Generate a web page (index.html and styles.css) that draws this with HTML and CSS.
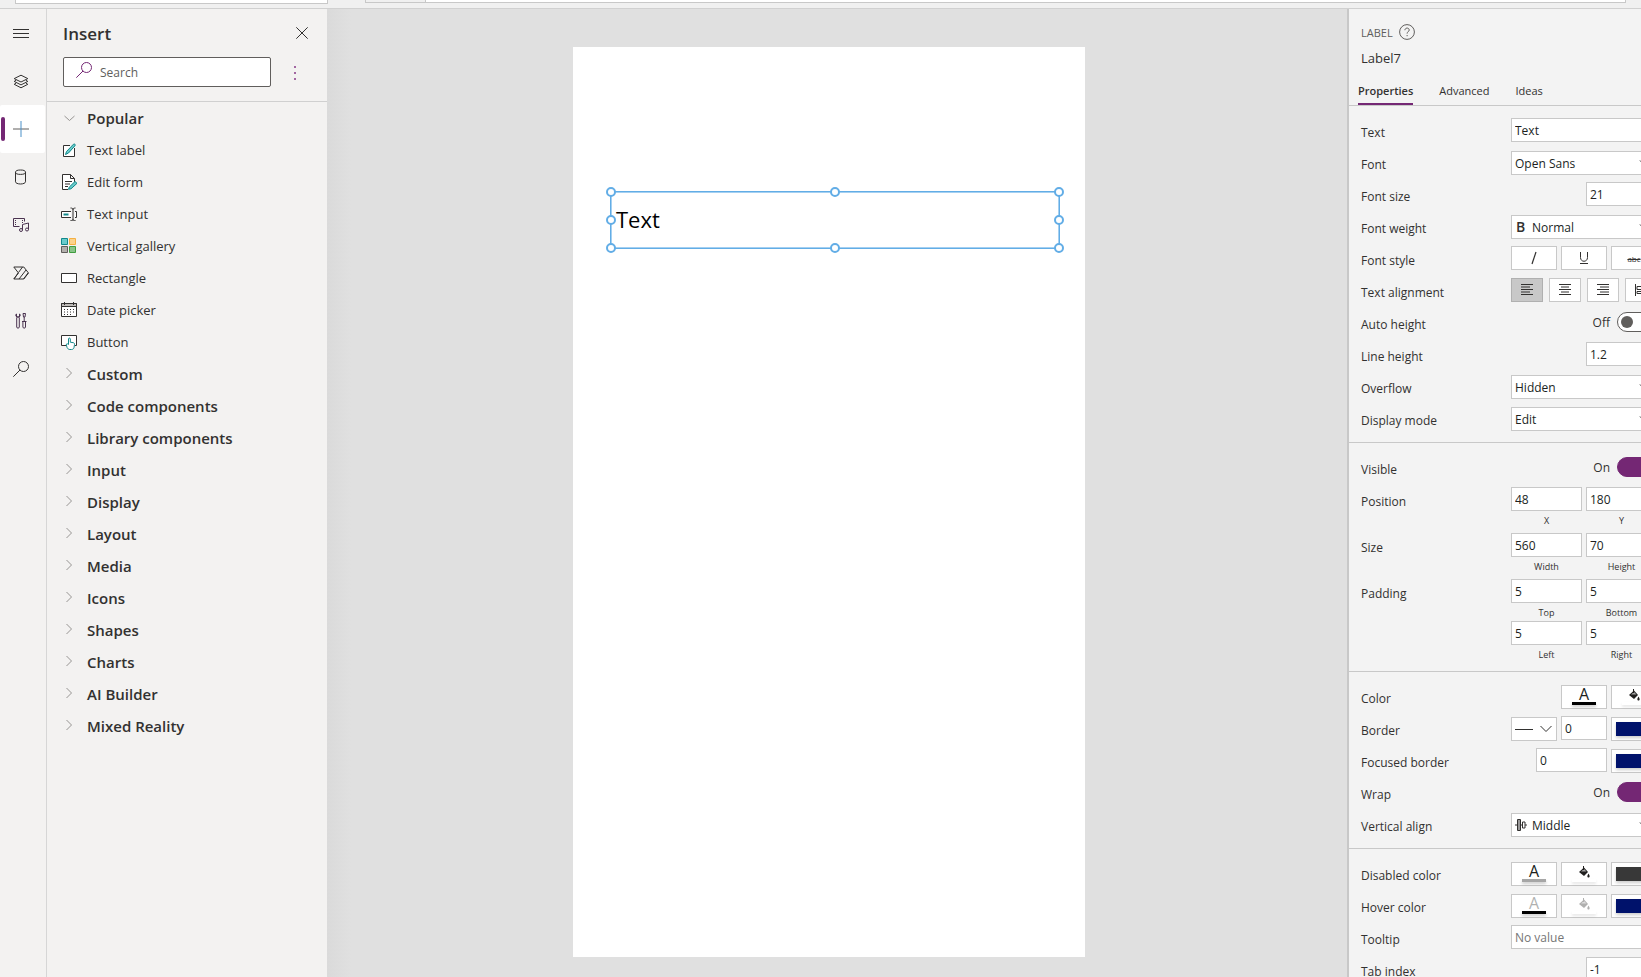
FILE: index.html
```html
<!DOCTYPE html>
<html lang="en">
<head>
<meta charset="utf-8">
<title>App editor</title>
<link rel="stylesheet" href="styles.css">
</head>
<body>
<div class="app">
  <header class="formula-bar">
    <div class="property-box"></div>
    <div class="fx-box"></div>
    <div class="formula-box"></div>
  </header>
  <div class="workspace">
    <nav class="rail" aria-label="Main">
      <button class="rail-item" type="button" aria-label="Menu">
        <svg class="ico" viewBox="0 0 16 16"><path d="M0 4.500h16M0 8.500h16M0 12.500h16"/></svg>
      </button>
      <button class="rail-item" type="button" aria-label="Tree view">
        <svg class="ico" viewBox="0 -1 16 16"><path d="M8 1.2 14.8 4.6 8 8 1.2 4.6zM3.2 6.2 1.2 7.4 8 10.9 14.8 7.4 12.8 6.2M3.2 9 1.2 10.3 8 13.8 14.8 10.3 12.8 9"/></svg>
      </button>
      <button class="rail-item rail-active" type="button" aria-label="Insert">
        <svg class="ico plus" viewBox="0 0 16 16"><path d="M0 8h16"/><path class="blue" d="M8 0v16"/></svg>
      </button>
      <button class="rail-item" type="button" aria-label="Data">
        <svg class="ico" viewBox="0 0 16 16"><ellipse cx="7.5" cy="3.2" rx="5" ry="2.2"/><path d="M2.5 3.2v9.6c0 1.2 2.2 2.2 5 2.2s5-1 5-2.2V3.2"/></svg>
      </button>
      <button class="rail-item" type="button" aria-label="Media">
        <svg class="ico purple" viewBox="0 0 16 16"><path d="M6.5 9.5h-6v-8h11v3"/><path d="M2.5 3v6M9.5 3v3" stroke-dasharray="1 1"/><path d="M9.5 13V7.5l6-1.5v6.5"/><circle cx="8" cy="13" r="1.5"/><circle cx="14" cy="12.5" r="1.5"/></svg>
      </button>
      <button class="rail-item" type="button" aria-label="Power Automate">
        <svg class="ico" viewBox="0 0 16 16"><path d="M.8 2h10L15.500 8l-4.700 6H.8L5.500 8zM9.500 2 5.500 7.500M13 5 6 14M5 8l-4 6M10.500 14 15 8"/></svg>
      </button>
      <button class="rail-item" type="button" aria-label="Advanced tools">
        <svg class="ico purple" viewBox="0 0 16 16"><path d="M3.500 1v3h3V1M5 4c-3 0-2.500-3-1.500-3M5 4c3 0 2.500-3 1.500-3M3.700 4.500v9.500c0 1.500 2.600 1.500 2.600 0V4.500M10 .5h2.500l-.5 3.500h-1.500zM11.200 4v4.500M9 8.500h4.500M9.900 8.500V14c0 1.500 2.600 1.500 2.600 0V8.500"/></svg>
      </button>
      <button class="rail-item" type="button" aria-label="Search">
        <svg class="ico" viewBox="0 0 16 16"><circle cx="10.500" cy="5.500" r="5"/><path d="M7 9 .3 15.700"/></svg>
      </button>
    </nav>

    <aside class="insert-panel">
      <div class="insert-head">
        <div class="insert-title">
          <h2>Insert</h2>
          <button class="plain" type="button" aria-label="Close">
            <svg class="ico-close" viewBox="0 0 12 12"><path d="M.3.3 11.700 11.700M11.700.3.3 11.700"/></svg>
          </button>
        </div>
        <div class="search-row">
          <label class="search">
            <svg class="ico search-ico" viewBox="0 0 16 16"><circle cx="10.500" cy="5.500" r="5"/><path d="M7 9 .3 15.700"/></svg>
            <input type="text" placeholder="Search" aria-label="Search">
          </label>
          <button class="plain more" type="button" aria-label="More">
            <svg class="ico-more" viewBox="0 0 4 16"><path d="M1 1h2v2H1zM1 7h2v2H1zM1 13h2v2H1z"/></svg>
          </button>
        </div>
      </div>
      <div class="tree">
        <button class="group" type="button"><svg class="chev" viewBox="0 0 12 12"><path d="M1.500 4 6.500 8.500 11.500 4"/></svg>Popular</button>
        <button class="item" type="button"><svg class="ico" viewBox="0 0 16 16"><path class="fill-w" d="M13.500 6v8.500h-11v-11H9"/><path class="teal" d="M4.500 12.500 5.500 9.500 12.500 2.200c1-.8 2.300.5 1.500 1.500L7.500 11z"/></svg>Text label</button>
        <button class="item" type="button"><svg class="ico" viewBox="0 0 16 16"><path class="fill-w" d="M7 15.500H1.500V.5h8l4 4V8M9.500.5v4h4M4 7.500h7M4 10h5M4 12.500h3"/><path class="teal" d="M7.500 15.300 8.300 13 14 7.500 16 9.300 10 14.800z"/></svg>Edit form</button>
        <button class="item" type="button"><svg class="ico" viewBox="0 0 16 16"><path class="fill-w" d="M10 11.500H.5v-6H10M14 5.500h1.500v6H14M12 2.500v12M9.500 2c1.500 0 2.500.5 2.500 1.500C12 2.500 13 2 14.500 2M9.500 14.500c1.500 0 2.500 0 2.500-1 0 1 1 1 2.500 1"/><path class="teal-solid" d="M2.500 7.500h5v2h-5z"/></svg>Text input</button>
        <button class="item" type="button"><svg class="ico" viewBox="0 0 16 16"><path fill="#69cbcb" stroke="#11898b" d="M.5.500h6v6h-6z"/><path fill="#fbd28b" stroke="#f4b042" d="M8.500.500h6v6h-6z"/><path fill="#b3b0ad" stroke="#605e5c" d="M.5 8.500h6v6h-6z"/><path fill="#88c488" stroke="#3f9c3f" d="M8.500 8.500h6v6h-6z"/></svg>Vertical gallery</button>
        <button class="item" type="button"><svg class="ico" viewBox="0 0 16 16"><path class="fill-w" d="M.5 3.500h15v9H.5z"/></svg>Rectangle</button>
        <button class="item" type="button"><svg class="ico" viewBox="0 0 16 16"><path class="fill-w" d="M.5 1.500h15v13H.5z"/><path fill="#bebbb8" d="M.5 1.500h15v3H.5zM3.500 0v3M12.500 0v3"/><path d="M3 7.500h11M3 10h11M3 12.500h9" stroke-dasharray="1 2"/></svg>Date picker</button>
        <button class="item" type="button"><svg class="ico" viewBox="0 0 16 16"><path class="fill-w" d="M5 11.500H.5v-10h15v10H14"/><path class="teal-line" d="M7.500 10.500V5c0-1.300 1.800-1.300 1.800 0v3.200l3 .5c1 .2 1.300.8 1.200 1.800l-.5 3c-.3 1.200-1 2-2.500 2H8.800c-1.500 0-2-.8-2.700-2L5.300 11c-.2-1.500 1.300-1.500 2.200-.5z"/></svg>Button</button>
        <button class="group" type="button"><svg class="chev" viewBox="0 0 12 12"><path d="M3.500 0 8.500 5 3.500 10"/></svg>Custom</button>
        <button class="group" type="button"><svg class="chev" viewBox="0 0 12 12"><path d="M3.500 0 8.500 5 3.500 10"/></svg>Code components</button>
        <button class="group" type="button"><svg class="chev" viewBox="0 0 12 12"><path d="M3.500 0 8.500 5 3.500 10"/></svg>Library components</button>
        <button class="group" type="button"><svg class="chev" viewBox="0 0 12 12"><path d="M3.500 0 8.500 5 3.500 10"/></svg>Input</button>
        <button class="group" type="button"><svg class="chev" viewBox="0 0 12 12"><path d="M3.500 0 8.500 5 3.500 10"/></svg>Display</button>
        <button class="group" type="button"><svg class="chev" viewBox="0 0 12 12"><path d="M3.500 0 8.500 5 3.500 10"/></svg>Layout</button>
        <button class="group" type="button"><svg class="chev" viewBox="0 0 12 12"><path d="M3.500 0 8.500 5 3.500 10"/></svg>Media</button>
        <button class="group" type="button"><svg class="chev" viewBox="0 0 12 12"><path d="M3.500 0 8.500 5 3.500 10"/></svg>Icons</button>
        <button class="group" type="button"><svg class="chev" viewBox="0 0 12 12"><path d="M3.500 0 8.500 5 3.500 10"/></svg>Shapes</button>
        <button class="group" type="button"><svg class="chev" viewBox="0 0 12 12"><path d="M3.500 0 8.500 5 3.500 10"/></svg>Charts</button>
        <button class="group" type="button"><svg class="chev" viewBox="0 0 12 12"><path d="M3.500 0 8.500 5 3.500 10"/></svg>AI Builder</button>
        <button class="group" type="button"><svg class="chev" viewBox="0 0 12 12"><path d="M3.500 0 8.500 5 3.500 10"/></svg>Mixed Reality</button>
      </div>
    </aside>

    <main class="canvas">
      <div class="screen">
        <div class="selected-label">
          Text
          <span class="handle h-l h-t"></span><span class="handle h-c h-t"></span><span class="handle h-r h-t"></span>
          <span class="handle h-l h-m"></span><span class="handle h-r h-m"></span>
          <span class="handle h-l h-b"></span><span class="handle h-c h-b"></span><span class="handle h-r h-b"></span>
        </div>
      </div>
    </main>

    <aside class="props">
      <div class="props-inner">
        <div class="props-head">
          <div class="kind">LABEL
            <svg class="help" viewBox="0 0 16 16"><circle cx="8" cy="8" r="7.400"/><path d="M5.900 6.200c0-2.800 4.300-2.800 4.300-.2 0 1.700-2.100 1.700-2.100 3.600M8.100 11v1.200"/></svg>
          </div>
          <div class="name">Label7</div>
        </div>
        <div class="tabs">
          <button class="tab tab-on" type="button">Properties</button>
          <button class="tab" type="button">Advanced</button>
          <button class="tab" type="button">Ideas</button>
        </div>

        <section class="section">
          <div class="row"><label for="text">Text</label><div class="ctl"><input class="box wide" id="text" type="text" value="Text"></div></div>
          <div class="row"><label for="font">Font</label><div class="ctl"><div class="pick"><select class="box wide" id="font"><option>Open Sans</option></select><svg class="arrow" viewBox="0 0 12 8"><path d="M1 1.500 6 6.500 11 1.500"/></svg></div></div></div>
          <div class="row"><label for="fsize">Font size</label><div class="ctl"><input class="box half" id="fsize" type="text" value="21"></div></div>
          <div class="row"><label for="weight">Font weight</label><div class="ctl"><div class="pick"><select class="box wide with-icon" id="weight"><option>Normal</option></select><b class="lead bold-lead">B</b><svg class="arrow" viewBox="0 0 12 8"><path d="M1 1.500 6 6.500 11 1.500"/></svg></div></div></div>
          <div class="row"><span class="lbl">Font style</span><div class="ctl">
            <button class="box third" type="button" aria-label="Italic"><svg class="g14" viewBox="0 0 14 14"><path d="M9 1 5 13" stroke-width="1.200"/></svg></button>
            <button class="box third" type="button" aria-label="Underline"><svg class="g14" viewBox="0 0 14 14"><path d="M3.500 1v5.500c0 5 7 5 7 0V1M3 12.500h8"/></svg></button>
            <button class="box third strike" type="button">abc</button>
          </div></div>
          <div class="row"><span class="lbl">Text alignment</span><div class="ctl align">
            <button class="box quarter pressed" type="button" aria-label="Left"><svg class="g14" viewBox="0 0 14 14"><path d="M1 1.500h12M1 4h9M1 6.500h12M1 9h9M1 11.500h12"/></svg></button>
            <button class="box quarter" type="button" aria-label="Center"><svg class="g14" viewBox="0 0 14 14"><path d="M1 1.500h12M3 4h8M1 6.500h12M3 9h8M1 11.500h12"/></svg></button>
            <button class="box quarter" type="button" aria-label="Right"><svg class="g14" viewBox="0 0 14 14"><path d="M1 1.500h12M4 4h9M1 6.500h12M4 9h9M1 11.500h12"/></svg></button>
            <button class="box quarter" type="button" aria-label="Justify"><svg class="g14" viewBox="0 0 14 14"><path d="M1.500 1v12M3 3.500h9v3H3zM3 8.500h9v2H3z"/></svg></button>
          </div></div>
          <div class="row"><label for="auto">Auto height</label><div class="ctl"><span class="state">Off</span><input class="switch" id="auto" type="checkbox"></div></div>
          <div class="row"><label for="lh">Line height</label><div class="ctl"><input class="box half" id="lh" type="text" value="1.2"></div></div>
          <div class="row"><label for="over">Overflow</label><div class="ctl"><div class="pick"><select class="box wide" id="over"><option>Hidden</option></select><svg class="arrow" viewBox="0 0 12 8"><path d="M1 1.500 6 6.500 11 1.500"/></svg></div></div></div>
          <div class="row"><label for="mode">Display mode</label><div class="ctl"><div class="pick"><select class="box wide" id="mode"><option>Edit</option></select><svg class="arrow" viewBox="0 0 12 8"><path d="M1 1.500 6 6.500 11 1.500"/></svg></div></div></div>
        </section>

        <section class="section">
          <div class="row"><label for="vis">Visible</label><div class="ctl"><span class="state">On</span><input class="switch" id="vis" type="checkbox" checked></div></div>
          <div class="row"><span class="lbl">Position</span><div class="ctl">
            <label class="field"><input class="box half" type="text" value="48">X</label>
            <label class="field"><input class="box half" type="text" value="180">Y</label>
          </div></div>
          <div class="row"><span class="lbl">Size</span><div class="ctl">
            <label class="field"><input class="box half" type="text" value="560">Width</label>
            <label class="field"><input class="box half" type="text" value="70">Height</label>
          </div></div>
          <div class="row"><span class="lbl">Padding</span><div class="ctl wrap">
            <label class="field"><input class="box half" type="text" value="5">Top</label>
            <label class="field"><input class="box half" type="text" value="5">Bottom</label>
            <label class="field"><input class="box half" type="text" value="5">Left</label>
            <label class="field"><input class="box half" type="text" value="5">Right</label>
          </div></div>
        </section>

        <section class="section">
          <div class="row"><span class="lbl">Color</span><div class="ctl">
            <button class="box third paint" type="button"><span class="glyph">A</span><span class="bar black"></span></button>
            <button class="box third paint" type="button" aria-label="Fill"><svg class="bucket" viewBox="0 0 12 12"><path d="M1 6 6 1.500 10 6 6 10z"/><path class="lid" d="M3 5.500 6 3 8.500 5.500z"/><path d="M5 0h1v4H5zM10.500 7.500c2 3 1 4 0 4s-2-1 0-4z"/></svg><span class="bar white"></span></button>
          </div></div>
          <div class="row"><label for="bw">Border</label><div class="ctl">
            <button class="box third paint line-style" type="button" aria-label="Border style"><svg class="line-ico" viewBox="0 0 38 14"><path d="M0 7.500h18M25.500 4 31 9.500 36.500 4"/></svg></button>
            <input class="box third" id="bw" type="text" value="0">
            <button class="box third paint" type="button" aria-label="Border color"><span class="swatch navy"></span></button>
          </div></div>
          <div class="row"><label for="fb">Focused border</label><div class="ctl">
            <input class="box half" id="fb" type="text" value="0">
            <button class="box third paint" type="button" aria-label="Focused border color"><span class="swatch navy"></span></button>
          </div></div>
          <div class="row"><label for="wrap">Wrap</label><div class="ctl"><span class="state">On</span><input class="switch" id="wrap" type="checkbox" checked></div></div>
          <div class="row"><label for="va">Vertical align</label><div class="ctl"><div class="pick"><select class="box wide with-icon" id="va"><option>Middle</option></select><svg class="lead" viewBox="0 0 12 12"><path d="M0 6h2M5.500 6H7M10 6h2M2.500.500h3v11h-3zM7.500 3h2.500v6H7.500zM4 1v10"/></svg><svg class="arrow" viewBox="0 0 12 8"><path d="M1 1.500 6 6.500 11 1.500"/></svg></div></div></div>
        </section>

        <section class="section">
          <div class="row"><span class="lbl">Disabled color</span><div class="ctl">
            <button class="box third paint" type="button"><span class="glyph">A</span><span class="bar gray"></span></button>
            <button class="box third paint" type="button" aria-label="Disabled fill"><svg class="bucket" viewBox="0 0 12 12"><path d="M1 6 6 1.500 10 6 6 10z"/><path class="lid" d="M3 5.500 6 3 8.500 5.500z"/><path d="M5 0h1v4H5zM10.500 7.500c2 3 1 4 0 4s-2-1 0-4z"/></svg><span class="bar white"></span></button>
            <button class="box third paint" type="button" aria-label="Disabled border color"><span class="swatch dark"></span></button>
          </div></div>
          <div class="row"><span class="lbl">Hover color</span><div class="ctl">
            <button class="box third paint dim" type="button"><span class="glyph">A</span><span class="bar black"></span></button>
            <button class="box third paint dim" type="button" aria-label="Hover fill"><svg class="bucket" viewBox="0 0 12 12"><path d="M1 6 6 1.500 10 6 6 10z"/><path class="lid" d="M3 5.500 6 3 8.500 5.500z"/><path d="M5 0h1v4H5zM10.500 7.500c2 3 1 4 0 4s-2-1 0-4z"/></svg><span class="bar white"></span></button>
            <button class="box third paint" type="button" aria-label="Hover border color"><span class="swatch navy"></span></button>
          </div></div>
          <div class="row"><label for="tip">Tooltip</label><div class="ctl"><input class="box wide" id="tip" type="text" placeholder="No value"></div></div>
          <div class="row"><label for="tab">Tab index</label><div class="ctl"><input class="box half" id="tab" type="text" value="-1"></div></div>
        </section>
      </div>
    </aside>
  </div>
</div>
</body>
</html>
```

FILE: styles.css
```css
* { box-sizing: border-box; }

body {
  margin: 0;
  height: 100vh;
  overflow: hidden;
  font-family: "Segoe UI", "Open Sans", "Noto Sans", sans-serif;
  font-size: 12px;
  color: #323130;
}

button, input, select { font: inherit; color: inherit; margin: 0; }
button { cursor: pointer; }

svg { display: block; flex: none; fill: none; stroke: #323130; stroke-width: 1; }

.app { display: flex; flex-direction: column; height: 100%; }

/* Formula bar */
.formula-bar {
  display: flex;
  flex: none;
  align-items: flex-start;
  height: 9px;
  padding: 0 15px;
  background: #f0f0f0;
  border-bottom: 1px solid #d0d0d0;
}
.property-box, .fx-box, .formula-box { height: 3px; border: 1px solid #c8c8c8; border-top: 0; }
.property-box { width: 313px; height: 4px; margin-right: 37px; background: #fff; }
.fx-box { width: 60px; border-right: 0; }
.formula-box { flex: 1; background: #fff; }

.workspace { display: flex; flex: 1; min-height: 0; }

/* Left rail */
.rail {
  display: flex;
  flex-direction: column;
  flex: none;
  width: 47px;
  padding-right: 1px;
  background: #f3f2f1;
  border-right: 1px solid #d6d6d6;
}
.rail-item {
  position: relative;
  display: flex;
  align-items: center;
  height: 48px;
  padding: 0 0 0 13px;
  border: 0;
  background: none;
}
.rail-active { background: #fff; border-radius: 2px; }
.rail-active::before {
  content: "";
  position: absolute;
  left: 1px;
  top: 12px;
  width: 4px;
  height: 24px;
  border-radius: 2px;
  background: #742774;
}
.ico { width: 16px; height: 16px; }
.purple { stroke: #4a3350; }
.plus { stroke: #605e5c; }
.blue { stroke: #4a90c8; }

/* Insert panel */
.insert-panel { flex: none; width: 280px; background: #f3f2f1; }
.insert-head { padding: 12px 18px 14px 16px; border-bottom: 1px solid #d0d0d0; }
.insert-title { display: flex; align-items: center; justify-content: space-between; height: 24px; padding-right: 1px; }
.insert-title h2 { margin: 0; padding-top: 2px; font-size: 17px; font-weight: 600; line-height: 22px; }
.plain { display: flex; padding: 0; border: 0; background: none; }
.ico-close { width: 12px; height: 12px; }
.search-row { display: flex; align-items: center; margin-top: 12px; gap: 22px; }
.search {
  display: flex;
  align-items: center;
  flex: none;
  width: 208px;
  height: 30px;
  padding-left: 12px;
  gap: 8px;
  background: #fff;
  border: 1px solid #605e5c;
  border-radius: 2px;
}
.search-ico { stroke: #742774; margin-bottom: 4px; }
.search input { width: 150px; border: 0; padding: 0; outline: 0; background: none; }
.search input::placeholder { color: #605e5c; opacity: 1; }
.ico-more { width: 4px; height: 16px; fill: #a267a2; stroke: none; }
.more { padding-top: 1px; }

.tree { display: flex; flex-direction: column; }
.group, .item {
  display: flex;
  align-items: center;
  height: 32px;
  padding: 0 0 0 14px;
  gap: 10px;
  border: 0;
  background: none;
  text-align: left;
}
.group { padding-left: 16px; gap: 12px; font-size: 15px; font-weight: 600; }
.item { font-size: 13px; }
.chev { width: 12px; height: 12px; stroke: #979593; }
.fill-w { fill: #fff; }
.teal { fill: #69cbcb; stroke: #11898b; }
.teal-solid { fill: #11898b; stroke: none; }
.teal-line { fill: #fff; stroke: #11898b; }

/* Canvas */
.canvas {
  display: flex;
  flex: 1;
  justify-content: center;
  min-width: 0;
  padding: 38px 16px 20px 0;
  background: linear-gradient(to right, #dadada, #e0e0e0 24px);
}
.screen { position: relative; height: 100%; aspect-ratio: 512 / 910; background: #fff; }
.selected-label {
  position: absolute;
  left: 37px;
  top: 144px;
  width: 450px;
  height: 58px;
  padding-left: 5px;
  border: 1px solid #62ade6;
  box-shadow: inset 0 0 0 1px #a5d0f1;
  font-family: "Open Sans", sans-serif;
  font-size: 22px;
  line-height: 54px;
  color: #000;
}
.handle {
  position: absolute;
  width: 10px;
  height: 10px;
  margin: -5px;
  border: 2px solid #62ade6;
  border-radius: 50%;
  background: #fff;
}
.h-l { left: 0; }
.h-c { left: 50%; }
.h-r { left: 100%; }
.h-t { top: 0; }
.h-m { top: 50%; }
.h-b { top: 100%; }

/* Properties */
.props {
  flex: none;
  width: 294px;
  overflow: hidden;
  background: #f3f3f3;
  border-left: 2px solid #c8c8c8;
}
.props-inner { width: 320px; }
.props-head { padding: 11px 12px 0; }
.kind { display: flex; align-items: center; height: 24px; gap: 6px; font-size: 11px; color: #605e5c; }
.help { width: 16px; height: 16px; stroke: #605e5c; }
.name { height: 26px; font-size: 13px; line-height: 28px; }
.tabs {
  display: flex;
  align-items: flex-end;
  height: 36px;
  padding-left: 9px;
  gap: 26px;
  border-bottom: 1px solid #c8c8c8;
}
.tab {
  height: 29px;
  padding: 2px 0 0;
  border: 0;
  border-bottom: 2px solid transparent;
  background: none;
  font-size: 11px;
}
.tab-on { border-bottom-color: #742774; font-weight: 600; }

.section { padding: 9px 12px 7px; border-bottom: 1px solid #c8c8c8; }
.row { display: flex; justify-content: space-between; min-height: 32px; padding: 3px 0 1px; }
.row > label, .lbl { height: 28px; line-height: 30px; }
.ctl { display: flex; justify-content: flex-end; align-items: flex-start; width: 146px; gap: 4px; }
.align { gap: 6px; }
.wrap { flex-wrap: wrap; row-gap: 0; }

.box {
  height: 24px;
  padding: 0 3px;
  border: 1px solid #c8c8c8;
  border-radius: 0;
  background: #fff;
  color: #201f1e;
  outline: 0;
}
.box::placeholder { color: #767676; opacity: 1; }
button.box { display: flex; align-items: center; justify-content: center; padding: 0; color: #323130; }
.wide { width: 146px; }
.half { width: 71px; }
.third { width: 46px; }
.quarter { width: 32px; }
.pressed { background: #c8c8c8; border-color: #b0b0b0; }
.g14 { width: 14px; height: 14px; }
.ctl .strike { font-size: 8px; text-decoration: line-through; }

.pick { position: relative; margin-top: 1px; }
.pick select { display: block; appearance: none; }
.pick .with-icon { padding-left: 20px; }
.arrow { position: absolute; right: 6px; top: 8px; width: 12px; height: 8px; pointer-events: none; }
.lead { position: absolute; left: 4px; top: 6px; width: 12px; height: 12px; }
.bold-lead { left: 5px; font-size: 14px; font-weight: 600; line-height: 12px; }

.state { margin-right: 3px; line-height: 26px; }
.switch {
  appearance: none;
  width: 40px;
  height: 20px;
  margin-top: 2px;
  padding: 3px;
  border: 1px solid #605e5c;
  border-radius: 10px;
  background: #fff;
}
.switch::before {
  content: "";
  display: block;
  width: 12px;
  height: 12px;
  border-radius: 50%;
  background: #605e5c;
}
.switch:checked { background: #742774; border-color: #742774; }
.switch:checked::before { margin-left: auto; background: #fff; }

.field { display: flex; flex-direction: column; align-items: center; height: 42px; font-size: 9px; line-height: 20px; }
.field input { flex: none; font-size: 12px; }

.ctl .paint { position: relative; flex-direction: column; justify-content: flex-start; margin-top: 1px; padding-top: 2px; }
.glyph { height: 14px; font-size: 16px; line-height: 13px; color: #201f1e; }
.bar { width: 24px; height: 3px; box-shadow: 0 2px 3px rgba(0, 0, 0, 0.2); }
.black { background: #000; }
.white { background: #fff; box-shadow: 0 2px 3px rgba(0, 0, 0, 0.1); }
.gray { background: #a6a6a6; }
.bucket { width: 12px; height: 12px; margin: 1px 0; fill: #201f1e; stroke: none; }
.bucket .lid { fill: #a0a0a0; }
.dim .glyph, .dim .bucket { opacity: 0.35; }
.swatch { width: 36px; height: 14px; margin-top: 2px; box-shadow: 0 2px 3px rgba(0, 0, 0, 0.2); }
.navy { background: #00126b; }
.dark { background: #383838; }
.ctl .line-style { padding-top: 4px; }
.line-ico { width: 38px; height: 14px; }
```
